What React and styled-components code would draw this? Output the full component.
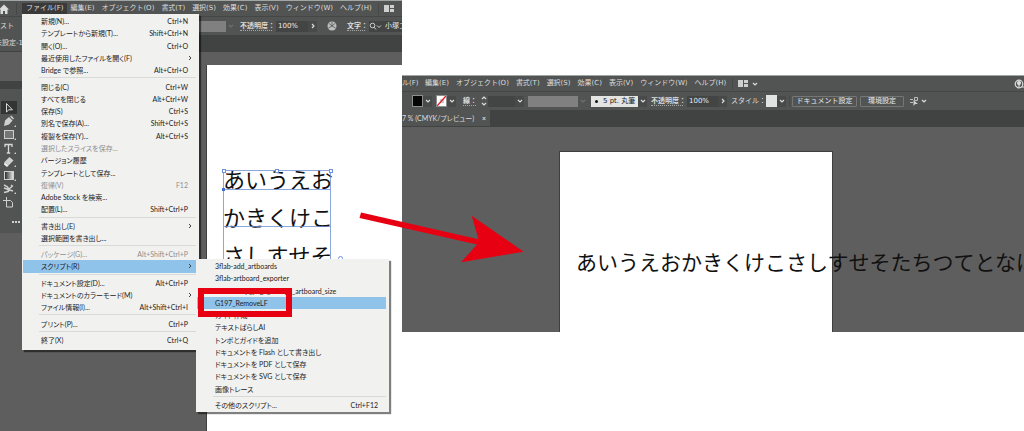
import React from "react";
import styled, { createGlobalStyle, css } from "styled-components";

const Global = createGlobalStyle`
  * { box-sizing: border-box; }
  body { margin: 0; background: #fff; }
  svg { flex: none; }
  button, input, select { font: inherit; color: inherit; margin: 0; padding: 0; border: 0; background: none; border-radius: 0; appearance: none; }
`;

const uiFont = `"DejaVu Sans", "Noto Sans CJK JP", sans-serif`;
const menuFont = `Lato, "Noto Sans CJK JP", sans-serif`;
const artFont = `"Noto Sans CJK JP", sans-serif`;

const Desktop = styled.main`
  position: relative;
  min-height: 431px;
  overflow: hidden;
`;

const AppWindow = styled.section`
  position: absolute;
  display: flex;
  flex-direction: column;
  overflow: hidden;
  background: #5e5e5e;
  color: #dcdcdc;
  font: 7px/12px ${uiFont};
  white-space: nowrap;
`;
const BackWindow = styled(AppWindow)`
  left: 0;
  top: 0;
  bottom: 0;
  width: 402px;
`;
const FrontWindow = styled(AppWindow)`
  left: 402px;
  right: 0;
  top: 75px;
  height: 257px;
`;

const MenuBar = styled.nav`
  display: flex;
  align-items: center;
  flex: none;
  height: 17px;
  background: #525453;
  border-top: 1px solid #9fa6a3;
  border-bottom: 1px solid #454646;
`;
const MenuButton = styled.button`
  && {
    flex: none;
    height: 11px;
    padding: 0 3px 0 4px;
    line-height: 11px;
    background: ${(p) => (p.$open ? "#3a3a3a" : "transparent")};
  }
`;
const HomeSlot = styled.span`
  display: flex;
  flex: none;
  width: 22px;
  height: 12px;
  svg { display: block; }
`;
const Divider = styled.span`
  flex: none;
  width: 1px;
  height: 12px;
  margin: 0 ${(p) => p.$after || 5}px 0 3px;
  background: #464747;
`;
const Spacer = styled.span`
  flex: 1;
`;

const ControlBar = styled.div`
  display: flex;
  align-items: center;
  flex: none;
  height: 18px;
  background: #525453;
`;
const Well = styled.span`
  flex: none;
  width: ${(p) => p.$w}px;
  height: 11px;
  background: ${(p) => p.$tone || "#434444"};
`;
const Field = styled.input`
  && {
    flex: none;
    width: ${(p) => p.$w}px;
    height: 11px;
    padding-left: 2px;
    background: #434444;
    color: #ececec;
    line-height: 11px;
  }
`;
const DropButton = styled.button`
  && {
    display: flex;
    align-items: center;
    justify-content: center;
    flex: none;
    width: 9px;
    height: 11px;
    background: ${(p) => (p.$plain ? "transparent" : "#484949")};
    color: ${(p) => (p.$dim ? "#6f7170" : "#dcdcdc")};
  }
  svg { display: block; }
`;
const Swatch = styled.span`
  flex: none;
  width: 11px;
  height: 12px;
  border: 1px solid ${(p) => p.$edge || "#8d8d8d"};
  background: ${(p) => p.$fill};
  svg { display: block; }
`;
const Label = styled.label`
  flex: none;
  width: ${(p) => p.$w}px;
  line-height: 11px;
  ${(p) => p.$link && css`
    height: 10px;
    line-height: 10px;
    font-weight: 700;
    border-bottom: 1px dotted #a5a5a5;
  `}
`;
const Gap = styled.span`
  flex: none;
  width: ${(p) => p.$w}px;
`;
const BrushBox = styled.span`
  display: flex;
  align-items: center;
  flex: none;
  gap: 5px;
  width: 47px;
  height: 11px;
  padding-left: 4px;
  background: #e4e4e2;
  color: #222;
  &::before {
    content: "";
    width: 3px;
    height: 3px;
    border-radius: 50%;
    background: #111;
  }
`;
const PushButton = styled.button`
  && {
    flex: none;
    width: ${(p) => p.$w}px;
    height: 11px;
    border: 1px solid #757776;
    border-radius: 1px;
    color: #ececec;
    line-height: 9px;
  }
`;

const TabStrip = styled.div`
  display: flex;
  flex: none;
  height: 17px;
  background: #414242;
`;
const Tab = styled.div`
  display: flex;
  align-items: center;
  flex: none;
  gap: 8px;
  height: 16px;
  min-width: ${(p) => p.$min || 0}px;
  padding-right: 4px;
  background: #525453;
  font-family: ${(p) => (p.$min ? "inherit" : menuFont)};
  font-feature-settings: "palt";
  text-indent: ${(p) => (p.$min ? -5 : 0)}px;
`;
const TabClose = styled.button`
  && { line-height: 11px; font-weight: 700; }
`;

const Pasteboard = styled.div`
  display: flex;
  flex: 1;
  min-height: 0;
`;
const ToolSide = styled.div`
  flex: none;
  width: 206px;
  padding-top: 29px;
`;
const ToolPanel = styled.div`
  width: 30px;
  height: 152px;
  background: #525453;
  border-top: 8px solid #414242;
  padding-top: 12px;
`;
const ToolButton = styled.button`
  && {
    display: block;
    width: 16px;
    height: 13px;
    margin-left: 1px;
    margin-bottom: ${(p) => (p.$loose ? 1 : 0)}px;
    background: ${(p) => (p.$on ? "#333434" : "transparent")};
  }
  svg { display: block; }
`;
const ToolMore = styled.div`
  padding: 6px 0 0 12px;
`;
const BackArtboard = styled.div`
  flex: 1;
  margin-top: 13px;
  padding: 104px 0 0 16px;
  background: #fff;
  border-left: 1px solid #3f3f3f;
  color: #111;
`;
const TextFrame = styled.div`
  position: relative;
  width: 109px;
  color: #111;
  font: 22px/38px ${artFont};
`;
const TextLine = styled.p`
  margin: 0;
  height: 38px;
  line-height: 18px;
`;
const FrameOverlay = styled.svg`
  position: absolute;
  left: -3px;
  top: -3px;
`;
const FrontArtboard = styled.div`
  width: 274px;
  margin: 24px 0 0 157px;
  padding: 95px 0 0 16px;
  background: #fff;
  border: solid #3f3f3f;
  border-width: 1px 1px 0 1px;
  color: #111;
  font: 21px/28px ${artFont};
`;

const Menu = styled.div`
  position: absolute;
  display: flex;
  flex-direction: column;
  padding: 1px 3px 4px 1px;
  background: #f1f1f0;
  color: #333;
  font: 7px/12px ${menuFont};
  font-feature-settings: "palt";
  white-space: nowrap;
  box-shadow: 2px 2px 1px rgba(0, 0, 0, 0.5);
`;
const FileMenu = styled(Menu)`
  left: 22px;
  top: 14px;
  width: 177px;
  height: 336px;
`;
const ScriptMenu = styled(Menu)`
  left: 196px;
  top: 259px;
  width: 193px;
  height: 153px;
  padding-bottom: 1px;
`;
const MenuItem = styled.button`
  && {
    display: flex;
    flex: 1;
    align-items: center;
    justify-content: space-between;
    min-height: 0;
    padding: 0 8px 0 18px;
    line-height: 12px;
    text-align: left;
    background: ${(p) => (p.$on ? "#90c3ea" : "transparent")};
    color: ${(p) => (p.disabled ? "#8f8f8f" : "#222")};
  }
`;
const Rule = styled.hr`
  flex: none;
  width: auto;
  height: 1px;
  margin: 1px 0 2px 16px;
  border: 0;
  background: #d9d9d9;
`;
const Submark = styled.svg`
  margin-right: -5px;
`;

const Highlight = styled.div`
  position: absolute;
  left: 198px;
  top: 288px;
  width: 94px;
  height: 29px;
  border: 6px solid #e60012;
`;
const Arrow = styled.svg`
  position: absolute;
  left: 358px;
  top: 210px;
`;

const Chevron = ({ right }) => (
  <svg width="6" height="6" viewBox="0 0 6 6" fill="none" stroke="currentColor" strokeWidth="1.2">
    <path d={right ? "M2 1l2 2-2 2" : "M1 2l2 2 2-2"} />
  </svg>
);
const LayoutIcon = () => (
  <svg width="10" height="7" viewBox="0 0 10 7" fill="#cfcfcf">
    <rect width="5" height="7" /><rect x="6" width="4" height="3" /><rect x="6" y="4" width="4" height="3" />
  </svg>
);

const tools = [
  ["select", <path d="M5.500 2.500v8.500l2.300-2.200h3.600z" fill="none" stroke="#d8d8d8" />],
  ["pen", <g fill="#d0d0d0"><path d="M3 11l1-5.500 4-3.500 3.500 3.500-3.500 4z" /><path d="M9 1.500l1.200-1L13 3.500l-1 1z" /></g>],
  ["rect", <rect x="3.500" y="2.500" width="9" height="8" fill="#757575" stroke="#cfcfcf" />],
  ["type", <path d="M4 5V2.500h7V5M7.500 2.500V11M5.800 11h3.400" fill="none" stroke="#d8d8d8" strokeWidth="1.300" />],
  ["eraser", <g><path d="M3.500 7l5-5 4 3.500-5 5z" fill="#d0d0d0" /><path d="M3.500 7l4 3.500L6 12 3 9.500z" fill="#f0f0f0" /></g>],
  ["gradient", <rect x="3.500" y="2.500" width="9" height="8" fill="url(#tone)" stroke="#cfcfcf" />],
  ["puppet", <path d="M3 3l3 1.500 2 2.500 3-2.500M3 6l3 1 2 2M3 10.500l4-1 2-1.500 3 1M10 3l2 1.500" fill="none" stroke="#cfcfcf" strokeWidth="1.500" />],
  ["artboard", <path d="M5.500 1v3M2 4.500h7.500l2 2v4.500h-6V4.500" fill="none" stroke="#cfcfcf" />],
];

const menuNames = ["編集(E)", "オブジェクト(O)", "書式(T)", "選択(S)", "効果(C)", "表示(V)", "ウィンドウ(W)", "ヘルプ(H)"];

const fileGroups = [
  [["新規(N)...", "Ctrl+N"], ["テンプレートから新規(T)...", "Shift+Ctrl+N"], ["開く(O)...", "Ctrl+O"], ["最近使用したファイルを開く(F)", ">"], ["Bridge で参照...", "Alt+Ctrl+O"]],
  [["閉じる(C)", "Ctrl+W"], ["すべてを閉じる", "Alt+Ctrl+W"], ["保存(S)", "Ctrl+S"], ["別名で保存(A)...", "Shift+Ctrl+S"], ["複製を保存(Y)...", "Alt+Ctrl+S"], ["選択したスライスを保存...", "", "off"], ["バージョン履歴"], ["テンプレートとして保存..."], ["復帰(V)", "F12", "off"], ["Adobe Stock を検索..."], ["配置(L)...", "Shift+Ctrl+P"]],
  [["書き出し(E)", ">"], ["選択範囲を書き出し..."]],
  [["パッケージ(G)...", "Alt+Shift+Ctrl+P", "off"], ["スクリプト(R)", ">", "on"]],
  [["ドキュメント設定(D)...", "Alt+Ctrl+P"], ["ドキュメントのカラーモード(M)", ">"], ["ファイル情報(I)...", "Alt+Shift+Ctrl+I"]],
  [["プリント(P)...", "Ctrl+P"]],
  [["終了(X)", "Ctrl+Q"]],
];
const scriptGroups = [
  [["3flab-add_artboards"], ["3flab-artboard_exporter"], ["3flab-swap_page_change_artboard_size"], ["G197_RemoveLF", "", "on"], ["ガイド作成"], ["テキストばらしAI"], ["トンボとガイドを追加"], ["ドキュメントを Flash として書き出し"], ["ドキュメントを PDF として保存"], ["ドキュメントを SVG として保存"], ["画像トレース"]],
  [["その他のスクリプト...", "Ctrl+F12"]],
];

const MenuGroups = ({ groups }) =>
  groups.map((group, i) => (
    <React.Fragment key={i}>
      {i > 0 && <Rule />}
      {group.map(([name, keys, state]) => (
        <MenuItem key={name} $on={state === "on"} disabled={state === "off"}>
          <span>{name}</span>
          {keys === ">" ? (
            <Submark width="5" height="6" viewBox="0 0 5 6" fill="none" stroke="#444"><path d="M1 1l2 2-2 2" /></Submark>
          ) : (
            <span>{keys}</span>
          )}
        </MenuItem>
      ))}
    </React.Fragment>
  ));

export default function App() {
  return (
    <Desktop>
      <Global />
      <BackWindow>
        <MenuBar>
          <HomeSlot>
            <svg width="22" height="12" viewBox="0 0 22 12">
              <path d="M-1 6.500L4 1.500l5 5H7.500V11h-2.500V8H3v3H.5V6.500z" fill="#dcdcdc" />
              <path d="M16.500 0v12" stroke="#464747" />
            </svg>
          </HomeSlot>
          <MenuButton $open>ファイル(F)</MenuButton>
          {menuNames.map((n) => <MenuButton key={n}>{n}</MenuButton>)}
          <Divider />
          <LayoutIcon />
        </MenuBar>
        <ControlBar>
          <Label as="span" $w={176}>スト</Label>
          <Well $w={50} $tone="#808080" />
          <DropButton $dim $plain aria-label="プロファイル"><Chevron /></DropButton>
          <Gap $w={5} />
          <Label $link $w={32} htmlFor="op1">不透明度：</Label>
          <Gap $w={4} />
          <Field id="op1" $w={32} defaultValue="100%" />
          <DropButton aria-label="不透明度の値"><Chevron right /></DropButton>
          <Gap $w={10} />
          <svg width="10" height="10" viewBox="0 0 10 10">
            <circle cx="5" cy="5" r="4.500" fill="#bdbdbd" />
            <path d="M5 1v4l3.500 2M5 5L1.500 7M2 2.500L5 5l3-2.500" stroke="#565656" fill="none" strokeWidth=".8" />
          </svg>
          <Gap $w={10} />
          <Label $link $w={18} htmlFor="font1">文字：</Label>
          <Gap $w={4} />
          <svg width="14" height="11" viewBox="0 0 14 11" fill="none" stroke="#cfcfcf">
            <rect width="14" height="11" fill="#434444" stroke="none" />
            <circle cx="3.500" cy="4.500" r="2.300" /><path d="M5 6.200L7 8.500M8 4.500l2 2 2-2" />
          </svg>
          <Field id="font1" $w={40} defaultValue="小塚ゴシック" />
        </ControlBar>
        <TabStrip><Tab $min={180}>未設定-1</Tab></TabStrip>
        <Pasteboard>
          <ToolSide>
            <ToolPanel>
              <svg width="0" height="0" style={{ display: "block" }}>
                <defs><linearGradient id="tone"><stop stopColor="#222" /><stop offset="1" stopColor="#eee" /></linearGradient></defs>
              </svg>
              {tools.map(([name, art], i) => (
                <ToolButton key={name} aria-label={name} $on={i === 0} $loose={i % 2 === 0}>
                  <svg width="16" height="13" viewBox="0 0 16 13">
                    {art}
                    {i > 0 && i < 7 && <path d="M15 10v2h-2z" fill="#cfcfcf" />}
                  </svg>
                </ToolButton>
              ))}
              <ToolMore>
                <svg width="8" height="2" viewBox="0 0 8 2" fill="#cfcfcf"><rect width="2" height="2" /><rect x="3" width="2" height="2" /><rect x="6" width="2" height="2" /></svg>
              </ToolMore>
            </ToolPanel>
          </ToolSide>
          <BackArtboard>
            <TextFrame>
              <TextLine>あいうえお</TextLine>
              <TextLine>かきくけこ</TextLine>
              <TextLine>さしすせそ</TextLine>
              <FrameOverlay width="124" height="94" viewBox="0 0 124 94" fill="none" stroke="#6f8fd6">
                <path d="M3.500 4.500h107v90h-107zM3.500 23.500h107M3.500 60.500h107" strokeWidth=".8" />
                <g fill="#fff">
                  <rect x="2.500" y="3.500" width="3" height="3" /><rect x="55.500" y="3.500" width="3" height="3" /><rect x="109.500" y="3.500" width="3" height="3" />
                  <circle cx="120.500" cy="92.500" r="2" />
                </g>
                <rect x="2" y="22" width="3" height="3" fill="#3f6fd0" stroke="none" />
              </FrameOverlay>
            </TextFrame>
          </BackArtboard>
        </Pasteboard>
      </BackWindow>

      <FrontWindow>
        <MenuBar>
          <Label as="span" $w={19}>ル(F)</Label>
          {menuNames.map((n) => <MenuButton key={n}>{n}</MenuButton>)}
          <Divider />
          <LayoutIcon />
          <Gap $w={2} />
          <DropButton $plain aria-label="ワークスペース"><Chevron /></DropButton>
          <Spacer />
          <svg width="10" height="12" viewBox="0 0 10 12" fill="none" stroke="#dcdcdc" strokeWidth="1.200">
            <circle cx="5" cy="6" r="3.800" /><circle cx="5" cy="5" r="1.500" fill="#dcdcdc" /><path d="M5 6v3M7 9h3" />
          </svg>
        </MenuBar>
        <ControlBar>
          <Gap $w={10} />
          <Swatch $fill="#050505" />
          <DropButton aria-label="塗り"><Chevron /></DropButton>
          <Gap $w={4} />
          <Swatch $fill="#fff">
            <svg width="9" height="10" viewBox="0 0 9 10"><rect x="3" y="3" width="4" height="4" fill="#ccc" /><path d="M0 10L9 0" stroke="#e8202a" strokeWidth="1.500" /></svg>
          </Swatch>
          <DropButton aria-label="線の色"><Chevron /></DropButton>
          <Gap $w={7} />
          <Label $link $w={13} htmlFor="stroke">線：</Label>
          <Gap $w={4} />
          <svg width="8" height="12" viewBox="0 0 8 12" fill="none" stroke="#dcdcdc" strokeWidth="1.200"><path d="M2 4l2-2 2 2M2 8l2 2 2-2" /></svg>
          <Field id="stroke" $w={27} defaultValue="" />
          <DropButton aria-label="線幅"><Chevron /></DropButton>
          <Gap $w={4} />
          <Well $w={50} $tone="#808080" />
          <DropButton $dim $plain aria-label="可変線幅"><Chevron /></DropButton>
          <Gap $w={4} />
          <BrushBox>5 pt. 丸筆</BrushBox>
          <DropButton aria-label="ブラシ"><Chevron /></DropButton>
          <Gap $w={4} />
          <Label $link $w={32} htmlFor="op2">不透明度：</Label>
          <Gap $w={4} />
          <Field id="op2" $w={31} defaultValue="100%" />
          <DropButton aria-label="不透明度の値"><Chevron right /></DropButton>
          <Gap $w={4} />
          <Label as="span" $w={35}>スタイル：</Label>
          <Swatch $fill="#e2e2e2" $edge="#e2e2e2" />
          <DropButton aria-label="スタイル"><Chevron /></DropButton>
          <Divider $after={2} />
          <PushButton $w={65}>ドキュメント設定</PushButton>
          <Gap $w={3} />
          <PushButton $w={44}>環境設定</PushButton>
          <Gap $w={5} />
          <svg width="10" height="11" viewBox="0 0 10 11" fill="none" stroke="#bdbdbd">
            <path d="M1 3.500h3M1 6.500h3M5.500 1.500h3v3h-3z" /><path d="M4.500 4v6l1.800-2h2.700z" fill="#cfcfcf" stroke="none" />
          </svg>
          <DropButton $plain aria-label="整列"><Chevron /></DropButton>
        </ControlBar>
        <TabStrip>
          <Tab><span>7 % (CMYK/プレビュー)</span><TabClose aria-label="閉じる">×</TabClose></Tab>
        </TabStrip>
        <Pasteboard>
          <FrontArtboard>あいうえおかきくけこさしすせそたちつてとなは</FrontArtboard>
        </Pasteboard>
      </FrontWindow>

      <FileMenu><MenuGroups groups={fileGroups} /></FileMenu>
      <ScriptMenu><MenuGroups groups={scriptGroups} /></ScriptMenu>
      <Highlight />
      <Arrow width="168" height="56" viewBox="358 210 168 56" fill="#e60012">
        <path d="M361 212.500L478.500 239.300 471.700 215.700 523.700 251.700 461 262.300 477 244.500 359.500 218z" />
      </Arrow>
    </Desktop>
  );
}
